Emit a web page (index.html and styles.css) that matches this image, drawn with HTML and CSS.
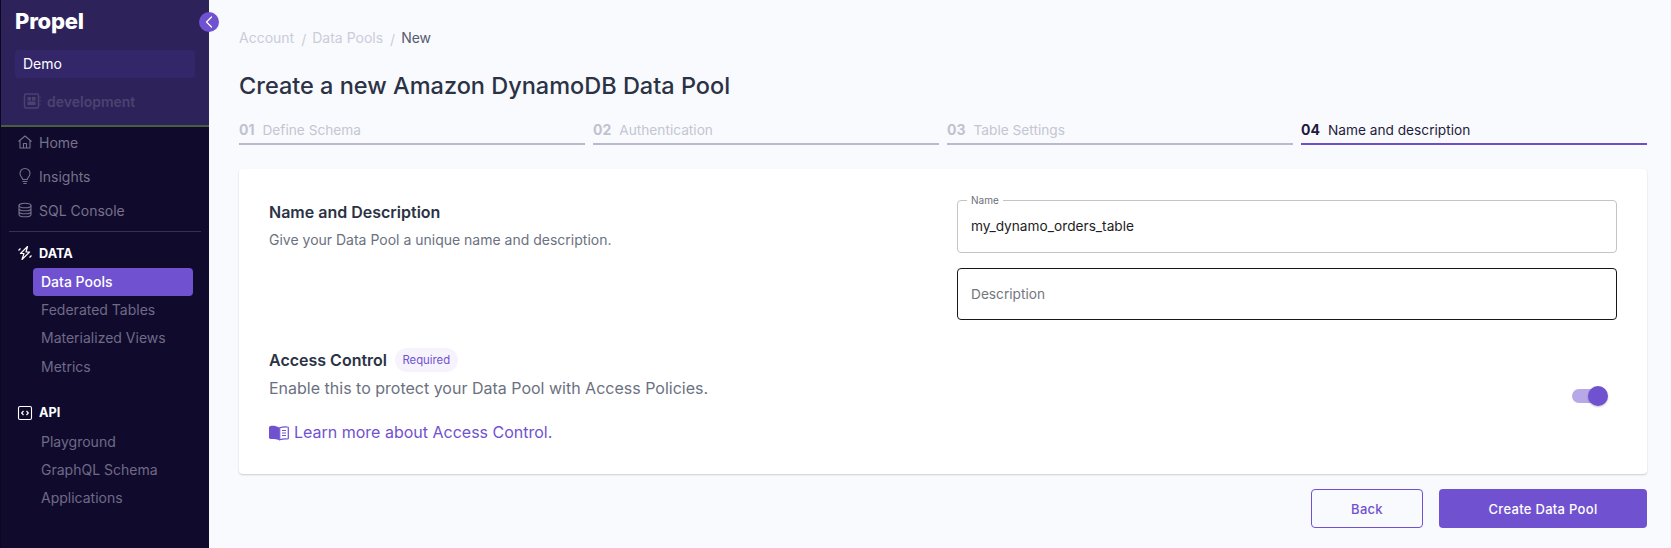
FILE: index.html
```html
<!DOCTYPE html>
<html lang="en">
<head>
<meta charset="utf-8">
<title>Create a new Amazon DynamoDB Data Pool</title>
<link rel="stylesheet" href="styles.css">
</head>
<body>
<div class="app">
  <aside class="sidebar">
    <div class="side-head">
      <div class="logo">Propel</div>
      <button class="collapse" aria-label="Collapse">
        <svg width="8" height="12" viewBox="0 0 8 12" fill="none" stroke="#fff" stroke-width="1.3" stroke-linecap="round" stroke-linejoin="round"><path d="M6.5 1 1.5 6l5 5"/></svg>
      </button>
      <div class="org">Demo</div>
      <div class="env">
        <svg width="18" height="18" viewBox="0 0 18 18" fill="none" stroke="#4c4270" stroke-width="1.5"><rect x="1.5" y="2" width="14" height="14" rx="1.5"/><rect x="4.5" y="5" width="3.5" height="3.5" fill="#4c4270" stroke="none"/><rect x="9" y="5" width="3.5" height="3.5" fill="#4c4270" stroke="none"/><rect x="4.5" y="9.5" width="8" height="3.5" fill="#4c4270" stroke="none"/><path d="M17 4.5v1.5M17 8v1.5M17 11.5V13" stroke-width="1"/></svg>
        <span>development</span>
      </div>
    </div>
    <nav class="nav">
      <a class="item">
        <svg width="16" height="16" viewBox="0 0 16 16" fill="none" stroke="#77728a" stroke-width="1.1" stroke-linejoin="round"><path d="M1.5 7.5 8 2l6.500 5.500M3 6.500V14h10V6.500M6.500 14V9.500h3V14"/></svg>
        <span>Home</span>
      </a>
      <a class="item">
        <svg width="16" height="18" viewBox="0 0 16 18" fill="none" stroke="#77728a" stroke-width="1.1" stroke-linecap="round"><path d="M5.800 12.500C5.500 10.500 3 9.500 3 6.500a5 5 0 0 1 10 0c0 3-2.500 4-2.800 6zM6 14.500h4M6.800 16.500h2.400"/></svg>
        <span>Insights</span>
      </a>
      <a class="item">
        <svg width="16" height="16" viewBox="0 0 16 16" fill="none" stroke="#77728a" stroke-width="1.1"><ellipse cx="8" cy="3.500" rx="6" ry="2.300"/><path d="M2 3.500v9c0 1.300 2.700 2.300 6 2.300s6-1 6-2.300v-9M2 6.500c0 1.300 2.700 2.300 6 2.300s6-1 6-2.300M2 9.500c0 1.300 2.700 2.300 6 2.300s6-1 6-2.300"/></svg>
        <span>SQL Console</span>
      </a>
      <div class="divider"></div>
      <div class="section">
        <svg width="16" height="16" viewBox="0 0 16 16" fill="none" stroke="#fff" stroke-width="1.2" stroke-linejoin="round"><path d="M10.500 1.500 3.500 8.500h3.500L5 14.500l7.500-7.500H9zM1.500 5.500l2-2M12.500 12.500l2-2"/></svg>
        <span>DATA</span>
      </div>
      <a class="sub active">Data Pools</a>
      <a class="sub">Federated Tables</a>
      <a class="sub">Materialized Views</a>
      <a class="sub">Metrics</a>
      <div class="section section-api">
        <svg width="16" height="16" viewBox="0 0 16 16" fill="none" stroke="#fff" stroke-width="1.1"><rect x="1.500" y="1.500" width="13" height="13" rx="1.500"/><path d="M6.500 6 4.700 8l1.800 2M9.500 6l1.800 2-1.800 2" stroke-width="1.200"/></svg>
        <span>API</span>
      </div>
      <a class="sub">Playground</a>
      <a class="sub">GraphQL Schema</a>
      <a class="sub">Applications</a>
    </nav>
  </aside>
  <main class="main">
    <div class="crumbs">
      <span class="crumb">Account</span><span class="sep">/</span><span class="crumb">Data Pools</span><span class="sep">/</span><span class="crumb-now">New</span>
    </div>
    <h1 class="title">Create a new Amazon DynamoDB Data Pool</h1>
    <div class="steps">
      <div class="step"><b>01</b><span>Define Schema</span></div>
      <div class="step"><b>02</b><span>Authentication</span></div>
      <div class="step"><b>03</b><span>Table Settings</span></div>
      <div class="step current"><b>04</b><span>Name and description</span></div>
    </div>
    <section class="card">
      <div class="name-row">
        <div class="name-intro">
          <h2 class="card-h">Name and Description</h2>
          <p class="card-p">Give your Data Pool a unique name and description.</p>
        </div>
        <div class="fields">
          <fieldset class="field">
            <legend>Name</legend>
            <div class="value">my_dynamo_orders_table</div>
          </fieldset>
          <div class="field-focus">Description</div>
        </div>
      </div>
      <div class="access">
        <div class="access-text">
          <div class="access-head"><h2 class="card-h">Access Control</h2><span class="pill">Required</span></div>
          <p class="access-p">Enable this to protect your Data Pool with Access Policies.</p>
          <a class="learn">
            <svg width="20" height="17" viewBox="0 0 20 17"><path d="M1.500 2C4.500 1.600 7.500 2 10 3.500V16c-2.500-1-5.500-1.300-8.500-1C.7 15 0 14.400 0 13.600V3.500C0 2.700.7 2.100 1.500 2z" fill="#7052d0"/><path d="M10.700 3.800C13 3 15.500 2.800 18.500 3c.5 0 .8.400.8.800v10.400c0 .4-.3.8-.8.800-3-.2-5.500 0-7.800.8z" fill="#fff" stroke="#7052d0" stroke-width="1.200"/><path d="M13 6.500h4M13 9h4M13 11.500h4" stroke="#7052d0" stroke-width="1.200"/></svg>
            <span>Learn more about Access Control.</span>
          </a>
        </div>
        <div class="toggle"><span class="knob"></span></div>
      </div>
    </section>
    <div class="actions">
      <button class="btn btn-back">Back</button>
      <button class="btn btn-create">Create Data Pool</button>
    </div>
  </main>
</div>
</body>
</html>
```
FILE: styles.css
```css
* { box-sizing: border-box; }
html, body { margin: 0; height: 100%; }
body { font-family: Inter, "Liberation Sans", sans-serif; background: #f9fafe; color: #2b3245; overflow: hidden; }
.app { display: flex; height: 548px; }

.sidebar { width: 209px; flex: none; background: #100a2d; border-left: 1px solid #0b0722; }
.side-head { position: relative; height: 127px; background: #2d2259; border-bottom: 2px solid #49603f; padding: 8px 14px 0; }
.logo { color: #fff; font-size: 22px; font-weight: 800; letter-spacing: -0.2px; line-height: 26px; height: 42px; }
.collapse { position: absolute; right: -10px; top: 12px; width: 20px; height: 20px; border: 0; padding: 0; border-radius: 50%; background: #7052d0; display: flex; align-items: center; justify-content: center; z-index: 2; }
.org { height: 28px; width: 180px; background: #33276a; border-radius: 4px; color: #fff; font-size: 14px; line-height: 28px; padding-left: 8px; }
.env { display: flex; align-items: center; gap: 6px; margin-top: 11px; padding-left: 8px; height: 24px; color: #4c4270; font-size: 14px; font-weight: 600; }

.nav { display: flex; flex-direction: column; }
.item { display: flex; align-items: center; height: 34px; padding: 0 0 4px 16px; gap: 6px; color: #77728a; font-size: 14px; }
.item svg { flex: none; width: 16px; }
.divider { height: 1px; margin: 2px 8px 0; background: #37304f; }
.section { display: flex; align-items: center; gap: 6px; height: 28.700px; margin-top: 7px; padding-left: 16px; color: #fff; font-size: 12.700px; font-weight: 700; }
.section-api { margin-top: 16.900px; height: 30px; }
.sub { display: block; height: 28.3px; line-height: 28px; margin: 0 16px 0 32px; padding-left: 8px; color: #6f6a86; font-size: 14px; border-radius: 4px; }
.sub.active { background: #7052d0; color: #fff; font-weight: 500; }

.main { flex: 1; min-width: 0; padding: 27px 24px 0 30px; }
.crumbs { display: flex; align-items: center; height: 20px; font-size: 14px; }
.crumb { color: #c9cdda; }
.crumb-now { color: #555c70; }
.sep { color: #c9cdda; margin: 0 6px 0 7px; position: relative; top: 2px; }
.title { margin: 23px 0 0; font-size: 23.500px; line-height: 32px; font-weight: 500; color: #2b3245; }
.steps { display: flex; gap: 8px; margin-top: 13px; }
.step { flex: 1; display: flex; gap: 8px; height: 30px; padding-top: 6px; line-height: 18px; font-size: 13.700px; border-bottom: 2px solid #bcb9cf; color: #c4c6d2; }
.step b { font-size: 14px; font-weight: 700; color: #c0c2ce; }
.step.current { border-bottom-color: #6d50c8; color: #1f1a3d; }
.step.current b { color: #1f1a3d; }

.card { margin-top: 24px; height: 305px; background: #fff; border-radius: 4px; box-shadow: 0 1px 2px rgba(0,0,0,.18); padding: 0 30px; }
.name-row { display: flex; justify-content: space-between; height: 163px; }
.name-intro { padding-top: 32px; }
.card-h { margin: 0; font-size: 16px; line-height: 22px; font-weight: 600; color: #2b3245; }
.card-p { margin: 7px 0 0; font-size: 14px; line-height: 20px; color: #6b7180; }
.fields { width: 660px; padding-top: 26px; }
.field { margin: 0; height: 58px; padding: 0 13px; border: 1px solid #c4c4c4; border-radius: 4px; }
.field legend { padding: 0 4px; margin-left: -4px; font-size: 10px; line-height: 10px; color: #6b6f78; }
.value { font-size: 13.700px; line-height: 20px; color: #1d1d24; margin-top: 11px; }
.field-focus { margin-top: 15px; height: 52px; border: 1px solid #16161c; border-radius: 4px; line-height: 50px; padding-left: 13px; font-size: 13.700px; color: #75777e; }
.access { display: flex; justify-content: space-between; align-items: flex-start; padding-top: 16px; }
.access-head { display: flex; align-items: center; gap: 8px; height: 24px; }
.pill { height: 24px; padding: 0 7.500px; border-radius: 12px; background: #f6f3fd; color: #7052d0; font-size: 11.300px; line-height: 24px; }
.access-p { margin: 4px 0 0; font-size: 16px; line-height: 24px; color: #6b7180; }
.learn { display: flex; align-items: center; gap: 5px; margin-top: 20px; color: #7052d0; font-size: 16px; line-height: 24px; }
.toggle { position: relative; width: 34px; height: 14px; margin: 41px 11px 0 0; background: #b8a8e7; border-radius: 7px; }
.knob { position: absolute; right: -2px; top: -3px; width: 20px; height: 20px; border-radius: 50%; background: #7052d0; box-shadow: 0 1px 2px rgba(0,0,0,.25); }

.actions { display: flex; justify-content: flex-end; gap: 16px; margin-top: 15px; }
.btn { height: 39px; border-radius: 4px; font-family: inherit; font-size: 13px; font-weight: 500; letter-spacing: .3px; }
.btn-back { width: 112px; background: transparent; border: 1px solid #7052d0; color: #7052d0; }
.btn-create { width: 208px; background: #7052d0; border: 0; color: #fff; }
```
